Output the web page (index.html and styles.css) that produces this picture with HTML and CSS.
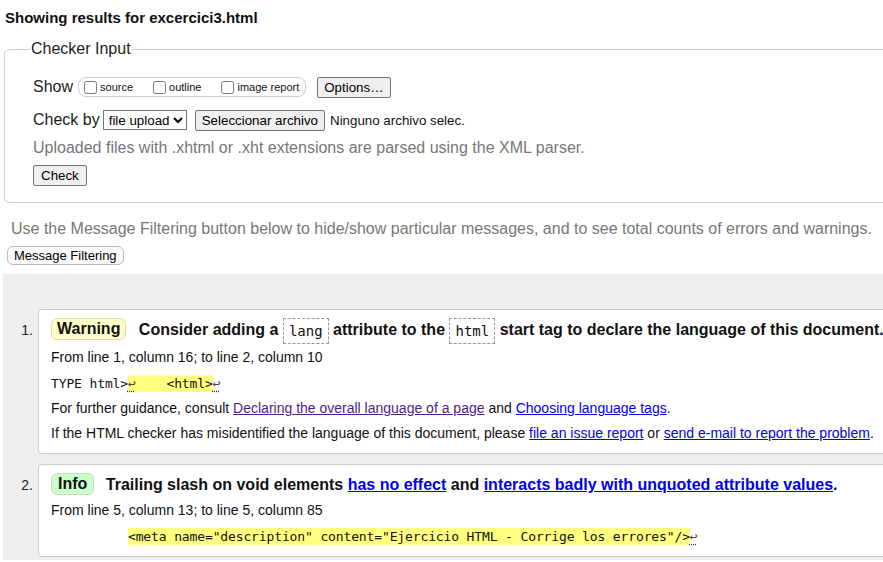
FILE: index.html
```html
<!DOCTYPE html>
<html lang="en">
<head>
<meta charset="utf-8">
<title>Showing results for excercici3.html</title>
<link rel="stylesheet" href="styles.css">
</head>
<body>
<div class="page">
  <h2 class="title">Showing results for excercici3.html</h2>
  <fieldset class="checker">
    <legend>Checker Input</legend>
    <div class="row row-show">
      <span class="lbl">Show</span>
      <span class="opts">
        <label class="opt"><input type="checkbox">source</label>
        <label class="opt"><input type="checkbox">outline</label>
        <label class="opt"><input type="checkbox">image report</label>
      </span>
      <button class="btn" type="button">Options…</button>
    </div>
    <div class="row row-by">
      <span class="lbl">Check by</span>
      <select class="sel"><option>file upload</option></select>
      <button class="btn" type="button">Seleccionar archivo</button>
      <span class="nofile">Ninguno archivo selec.</span>
    </div>
    <p class="note">Uploaded files with .xhtml or .xht extensions are parsed using the XML parser.</p>
    <div class="submit"><button class="btn btn-check" type="button">Check</button></div>
  </fieldset>
  <p class="hint">Use the Message Filtering button below to hide/show particular messages, and to see total counts of errors and warnings.</p>
  <button class="filter" type="button">Message Filtering</button>
  <ol class="results">
    <li class="item">
      <span class="num">1.</span>
      <div class="card">
        <p class="msg"><strong class="badge warn">Warning</strong> Consider adding a <code class="kw">lang</code> attribute to the <code class="kw">html</code> start tag to declare the language of this document.</p>
        <p class="line">From line 1, column 16; to line 2, column 10</p>
        <p class="extract"><code>TYPE html&gt;<b><span class="lf">↩</span>    &lt;html&gt;</b><span class="lf">↩</span></code></p>
        <p class="line">For further guidance, consult <a class="visited" href="#">Declaring the overall language of a page</a> and <a href="#">Choosing language tags</a>.</p>
        <p class="line">If the HTML checker has misidentified the language of this document, please <a href="#">file an issue report</a> or <a href="#">send e-mail to report the problem</a>.</p>
      </div>
    </li>
    <li class="item">
      <span class="num">2.</span>
      <div class="card">
        <p class="msg"><strong class="badge info">Info</strong> Trailing slash on void elements <a href="#">has no effect</a> and <a href="#">interacts badly with unquoted attribute values</a>.</p>
        <p class="line">From line 5, column 13; to line 5, column 85</p>
        <p class="extract"><code>          <b>&lt;meta name="description" content="Ejercicio HTML - Corrige los errores"/&gt;</b><span class="lf">↩</span></code></p>
      </div>
    </li>
  </ol>
</div>
</body>
</html>
```

FILE: styles.css
```css
html, body {
  margin: 0;
  padding: 0;
  overflow: hidden;
  background: #fff;
}

body {
  font-family: "Liberation Sans", Arial, sans-serif;
  color: #111;
}

.page {
  width: 1150px;
}

.title {
  margin: 0;
  padding: 9px 0 0 5px;
  font-size: 15px;
  line-height: 17px;
  font-weight: bold;
}

.checker {
  margin: 14px 0 0 4px;
  padding: 0 0 16px 28px;
  border: 1px solid #ccc;
  border-radius: 5px;
  min-width: 0;
}

.checker legend {
  margin-left: -3px;
  padding: 0 1px;
  font-size: 16px;
  line-height: 18px;
  color: #222;
}

.row {
  display: flex;
  align-items: center;
  height: 20px;
}

.row-show {
  margin-top: 19px;
}

.row-by {
  margin-top: 13px;
}

.lbl {
  font-size: 16px;
  color: #222;
  margin-right: 5px;
}

.row-by .lbl {
  margin-right: 3px;
}

.opts {
  display: inline-flex;
  align-items: center;
  box-sizing: border-box;
  height: 20px;
  padding: 0 6px 0 5px;
  border: 1px solid #ccc;
  border-radius: 8px;
  margin-right: 11px;
}

.opt {
  display: inline-flex;
  align-items: center;
  font-size: 11px;
  color: #111;
}

.opt + .opt {
  margin-left: 20px;
}

.opt input {
  margin: 0 3px 0 0;
  width: 13px;
  height: 13px;
}

.btn {
  font-family: "Liberation Sans", Arial, sans-serif;
  font-size: 13.33px;
  color: #000;
  background: #efefef;
  border: 1px solid #767676;
  border-radius: 2px;
  padding: 2px 6px;
  height: 21px;
  line-height: 15px;
}

.btn-check {
  padding: 2px 7px;
}

.sel {
  font-family: "Liberation Sans", Arial, sans-serif;
  font-size: 13.33px;
  width: 84px;
  height: 20px;
  margin-right: 8px;
  color: #000;
  background: #fff;
  border: 1px solid #767676;
  border-radius: 0;
  padding: 0 0 0 1px;
}

.nofile {
  font-size: 13.33px;
  margin-left: 5px;
  color: #111;
}

.note {
  margin: 9px 0 0;
  font-size: 16px;
  line-height: 18px;
  color: #777;
}

.submit {
  margin-top: 8px;
  height: 21px;
  display: flex;
}

.hint {
  margin: 17px 0 0 11px;
  font-size: 16px;
  line-height: 18px;
  color: #777;
}

.filter {
  display: block;
  margin: 8px 0 0 7px;
  height: 19px;
  padding: 0 6px;
  font-family: "Liberation Sans", Arial, sans-serif;
  font-size: 13px;
  line-height: 17px;
  color: #000;
  background: #fafafa;
  border: 1px solid #bbb;
  border-radius: 6px;
}

.results {
  list-style: none;
  margin: 9px 0 0 3px;
  padding: 35px 0 3px 0;
  background: #eee;
}

.item {
  display: flex;
  align-items: flex-start;
}

.item + .item {
  margin-top: 10px;
}

.num {
  flex: 0 0 35px;
  box-sizing: border-box;
  text-align: right;
  padding: 9px 5px 0 0;
  font-size: 14px;
  line-height: 24px;
  color: #222;
}

.card {
  flex: 1 1 auto;
  background: #fff;
  border: 1px solid #ccc;
  border-radius: 4px;
  padding: 8px 12px 7px;
}

.msg {
  margin: 0;
  font-size: 16px;
  line-height: 24px;
  font-weight: bold;
  white-space: nowrap;
}

.badge {
  display: inline-block;
  padding: 0 5px;
  border: 1px solid #ddd;
  border-radius: 6px;
  line-height: 20px;
  margin-right: 8px;
  vertical-align: 1px;
}

.badge.warn {
  background: #ffffcc;
  border-color: #e0ddb0;
}

.badge.info {
  background: #ccffcc;
  border-color: #c6dec6;
  padding: 0 6px;
  margin-right: 7px;
}

.kw {
  display: inline-block;
  vertical-align: top;
  font-family: "DejaVu Sans Mono", monospace;
  font-size: 14px;
  font-weight: normal;
  line-height: 24px;
  padding: 0 5px;
  border: 1px dashed #999;
}

.line {
  margin: 1px 0 0;
  font-size: 14px;
  line-height: 25px;
  white-space: nowrap;
}

.line + .line,
.extract + .line {
  margin-top: 0;
}

.extract {
  margin: 0;
  line-height: 25px;
  white-space: pre;
}

.extract code {
  font-family: "DejaVu Sans Mono", monospace;
  font-size: 13px;
  letter-spacing: -0.13px;
  color: #111;
}

.extract b {
  font-weight: normal;
  background: #ffff80;
  padding: 1px 0;
}

.lf {
  color: #444;
  text-decoration: underline dotted #333;
  text-underline-offset: 3px;
}

a {
  color: #0000ee;
  text-decoration: underline;
}

a.visited {
  color: #551a8b;
}
```
